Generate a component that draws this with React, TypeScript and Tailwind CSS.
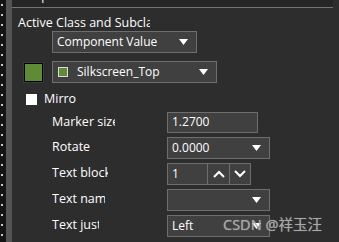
import React from "react";

const font = { fontFamily: '"Segoe UI", "Open Sans", "Noto Sans", sans-serif' };

function Arrow() {
  return (
    <svg width="9" height="6" viewBox="0 0 9 6" className="shrink-0">
      <path d="M0 0 H9 L4.5 6 Z" fill="#ffffff" />
    </svg>
  );
}

function Select({ text, width, children }: { text?: string; width: number; children?: React.ReactNode }) {
  return (
    <div
      className="flex h-[22px] items-center border border-[#6e6e6e] bg-[#404040] pl-[4px] pr-[8px] text-[12px] text-white"
      style={{ width }}
    >
      {children}
      <span className="flex-1 truncate">{text}</span>
      <Arrow />
    </div>
  );
}

function Label({ text, w }: { text: string; w: number }) {
  return (
    <div className="w-[155px] shrink-0 pl-[40px]">
      <div className="overflow-hidden whitespace-nowrap text-[12.5px] text-white" style={{ width: w }}>
        {text}
      </div>
    </div>
  );
}

export default function App() {
  return (
    <div className="flex h-[242px] w-[339px] overflow-hidden bg-[#2d2d2d]" style={font}>
      <div className="w-[6px] shrink-0 bg-[#141414] bg-[radial-gradient(circle_at_2px_5px,#c8c8c8_1px,transparent_1.5px)] bg-[length:6px_10px]" />
      <div className="w-[6px] shrink-0 bg-[#545454]" />

      <div className="relative flex-1 bg-[#2d2d2d]">
        <div className="mr-[6px] h-[8px] overflow-hidden border-b border-[#747474] bg-[#262626]">
          <div className="-mt-[13px] pl-[20px] text-[12px] text-white">Options</div>
        </div>

        <div className="mt-[7px] w-[138px] overflow-hidden whitespace-nowrap pl-[6px] text-[12.5px] leading-[16px] text-white">
          Active Class and Subclass
        </div>

        <div className="ml-[40px]">
          <Select text="Component Value" width={145} />
        </div>

        <div className="mt-[8px] flex items-center">
          <div className="ml-[12px] h-[19px] w-[19px] border border-black bg-[#5f8a36] outline outline-1 outline-[#3a3a3a]" />
          <div className="ml-[9px]">
            <Select text="Silkscreen_Top" width={165}>
              <div className="ml-[1px] mr-[9px] h-[10px] w-[10px] border border-[#dcdcdc] bg-[#5f8a36]" />
            </Select>
          </div>
        </div>

        <div className="mt-[7px] flex items-center">
          <div className="ml-[14px] h-[11px] w-[11px] bg-white" />
          <span className="ml-[7px] text-[12.5px] text-white">Mirro</span>
        </div>

        <div className="mt-[3px] flex flex-col gap-[4px]">
          <div className="flex items-center">
            <Label text="Marker size" w={63} />
            <div className="flex h-[21px] w-[91px] items-center border border-[#6e6e6e] bg-[#404040] pl-[4px] text-[12px] text-white">
              1.2700
            </div>
          </div>
          <div className="flex items-center">
            <Label text="Rotate" w={70} />
            <Select text="0.0000" width={103} />
          </div>
          <div className="flex items-center">
            <Label text="Text block" w={56} />
            <div className="flex h-[22px] w-[84px] border border-[#6e6e6e] bg-[#404040] text-[12px] text-white">
              <div className="flex w-[40px] items-center border-r border-[#6e6e6e] pl-[4px]">1</div>
              <div className="flex w-[22px] items-center justify-center border-r border-[#6e6e6e]">
                <svg width="12" height="8" viewBox="0 0 12 8">
                  <path d="M1 7 L6 2 L11 7" stroke="#fff" strokeWidth="2" fill="none" />
                </svg>
              </div>
              <div className="flex flex-1 items-center justify-center">
                <svg width="12" height="8" viewBox="0 0 12 8">
                  <path d="M1 1 L6 6 L11 1" stroke="#fff" strokeWidth="2" fill="none" />
                </svg>
              </div>
            </div>
          </div>
          <div className="flex items-center">
            <Label text="Text name" w={53} />
            <Select width={103} />
          </div>
          <div className="flex items-center">
            <Label text="Text justification" w={47} />
            <Select text="Left" width={103} />
          </div>
        </div>

        <div
          className="absolute left-[211px] top-[214px] whitespace-nowrap text-[14.5px] text-[#a8a8a8]"
          style={{ fontFamily: '"Noto Sans", "Noto Sans CJK SC", sans-serif', textShadow: "0 0 1px #ffffff66" }}
        >
          CSDN @祥玉汪
        </div>
      </div>
    </div>
  );
}
